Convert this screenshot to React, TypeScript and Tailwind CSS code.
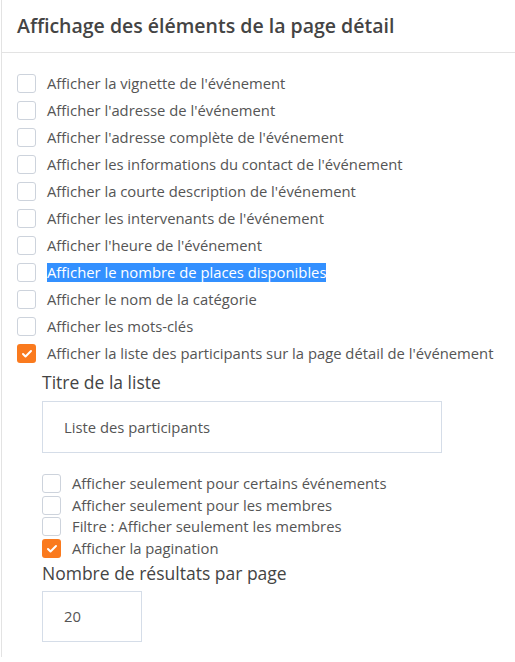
import { Check } from "lucide-react";

const items = [
  { label: "Afficher la vignette de l'événement" },
  { label: "Afficher l'adresse de l'événement" },
  { label: "Afficher l'adresse complète de l'événement" },
  { label: "Afficher les informations du contact de l'événement" },
  { label: "Afficher la courte description de l'événement" },
  { label: "Afficher les intervenants de l'événement" },
  { label: "Afficher l'heure de l'événement" },
  { label: "Afficher le nombre de places disponibles", selected: true },
  { label: "Afficher le nom de la catégorie" },
  { label: "Afficher les mots-clés" },
  {
    label: "Afficher la liste des participants sur la page détail de l'événement",
    checked: true
  }
];

const subItems = [
  { label: "Afficher seulement pour certains événements" },
  { label: "Afficher seulement pour les membres" },
  { label: "Filtre : Afficher seulement les membres" },
  { label: "Afficher la pagination", checked: true }
];

function Box({ checked }: { checked?: boolean }) {
  return checked ? (
    <span className="flex h-[19px] w-[19px] shrink-0 items-center justify-center rounded-[3px] bg-[#fa7a1e]">
      <Check className="h-3 w-3 text-white" strokeWidth={4} />
    </span>
  ) : (
    <span className="h-[19px] w-[19px] shrink-0 rounded-[3px] border border-[#cdd3dc] bg-white" />
  );
}

export default function App() {
  return (
    <div className="min-h-[662px] bg-white font-['Open_Sans',sans-serif] text-[#555]">
      <div className="ml-[1px] min-h-[657px] border-l border-[#e3e3e3]">
        {/* Header */}
        <div className="flex h-[53px] items-center border-b border-[#e3e3e3] pl-[15px]">
          <h2 className="text-[19.5px] font-semibold text-[#444]">
            Affichage des éléments de la page détail
          </h2>
        </div>

        <div className="pl-[15px] pt-[21px]">
          <div className="flex flex-col gap-[8px]">
            {items.map((item) => (
              <label key={item.label} className="flex h-[19px] items-center gap-[11px]">
                <Box checked={item.checked} />
                <span
                  className={
                    item.selected
                      ? "bg-[#3390ff] text-[14.8px] leading-[19px] text-white"
                      : "text-[14.8px] leading-[19px]"
                  }
                >
                  {item.label}
                </span>
              </label>
            ))}
          </div>

          <div className="pl-[25px]">
            <div className="mt-[8px] text-[17.5px] font-medium leading-[22px] text-[#444]">
              Titre de la liste
            </div>
            <div className="mt-[8px] flex h-[52px] w-[400px] items-center border border-[#d5dde8] pl-[21px] text-[14.8px]">
              Liste des participants
            </div>

            <div className="mt-[21px] flex flex-col gap-[2.7px]">
              {subItems.map((item) => (
                <label key={item.label} className="flex h-[19px] items-center gap-[11px]">
                  <Box checked={item.checked} />
                  <span className="text-[14.8px] leading-[19px]">{item.label}</span>
                </label>
              ))}
            </div>

            <div className="mt-[4px] text-[17.5px] font-medium leading-[22px] text-[#444]">
              Nombre de résultats par page
            </div>
            <div className="mt-[7px] flex h-[51px] w-[100px] items-center border border-[#d5dde8] pl-[21px] text-[14.8px]">
              20
            </div>
          </div>
        </div>
      </div>
    </div>
  );
}
